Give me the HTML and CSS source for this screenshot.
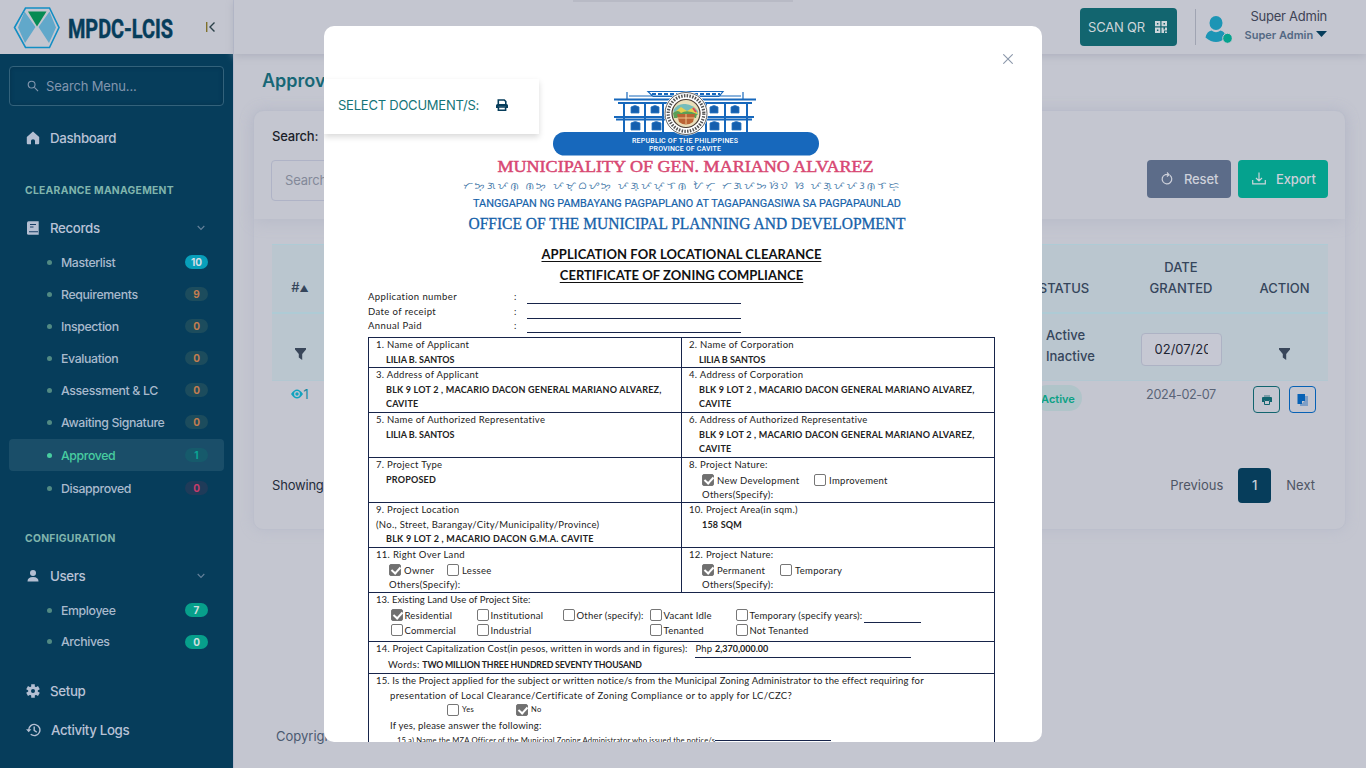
FILE: index.html
```html
<!DOCTYPE html>
<html lang="en">
<head>
<meta charset="utf-8">
<title>MPDC-LCIS</title>
<link rel="stylesheet" href="styles.css">
</head>
<body>
<div class="app">
  <aside class="sidebar">
    <div class="brand">
      <svg class="logo" width="170" height="46" viewBox="0 0 170 46">
        <path d="M12.500 4h24l9.500 19.500-9.500 20h-24L1.500 23.500z" fill="none" stroke="#128ec4" stroke-width="1.600"/>
        <path d="M11.500 7.500L5 23.500l7 15.500 10.500-16zM36.500 7.500L43 23.500 36 39 25.500 23z" fill="#61a8ca"/>
        <path d="M15 7.500h18.500L24 22.500z" fill="#078b53"/>
        <text x="55" y="33.500" textLength="105" lengthAdjust="spacingAndGlyphs" class="logo-text">MPDC-LCIS</text>
      </svg>
      <svg class="collapse" width="12" height="12" viewBox="0 0 12 12" fill="none" stroke="#2b4049" stroke-width="1.400"><path d="M1.700 1v10" stroke="#80702a"/><path d="M9.500 1.500L5 6l4.500 4.500"/></svg>
    </div>
    <nav class="menu">
      <div class="menu-search">
        <svg width="12" height="12" viewBox="0 0 13 13" fill="none" stroke="#8296ae" stroke-width="1.200"><circle cx="5" cy="5" r="3.700"/><path d="M8 8l4 4"/></svg>
        <span>Search Menu...</span>
      </div>
      <div class="item item-dash"><svg width="14" height="14" viewBox="0 0 14 14" fill="#b4bfd2"><path d="M7 .6L.8 6v6.200q0 1 1 1H5V9.800q0-1.500 2-1.500t2 1.500v3.400h3.200q1 0 1-1V6z"/></svg><span>Dashboard</span></div>
      <h6>CLEARANCE MANAGEMENT</h6>
      <div class="item item-group"><svg width="14" height="14" viewBox="0 0 14 14"><path d="M2.500.3h10.200v13.400H2.500q-1.500 0-1.500-1.500V1.800Q1 .3 2.500.3z" fill="#b4bfd2"/><path d="M4 3.500h6M4 6h3.500M3 10.800h9" stroke="#173f66" stroke-width="1.100"/></svg><span>Records</span><svg class="chev" width="8" height="6" viewBox="0 0 8 6" fill="none" stroke="#64809a" stroke-width="1.100"><path d="M.7 1L4 4.500 7.300 1"/></svg></div>
      <div class="sub"><i></i><span>Masterlist</span><b class="badge cyan">10</b></div>
      <div class="sub"><i></i><span>Requirements</span><b class="badge warn">9</b></div>
      <div class="sub"><i></i><span>Inspection</span><b class="badge warn">0</b></div>
      <div class="sub"><i></i><span>Evaluation</span><b class="badge warn">0</b></div>
      <div class="sub"><i></i><span>Assessment &amp; LC</span><b class="badge warn">0</b></div>
      <div class="sub"><i></i><span>Awaiting Signature</span><b class="badge warn">0</b></div>
      <div class="sub active"><i></i><span>Approved</span><b class="badge ok">1</b></div>
      <div class="sub"><i></i><span>Disapproved</span><b class="badge bad">0</b></div>
      <h6 class="config">CONFIGURATION</h6>
      <div class="item item-group"><svg width="14" height="14" viewBox="0 0 14 14" fill="#b4bfd2"><circle cx="7" cy="4" r="3"/><path d="M1.500 12.500q0-4.500 5.500-4.500t5.500 4.500z"/></svg><span>Users</span><svg class="chev" width="8" height="6" viewBox="0 0 8 6" fill="none" stroke="#64809a" stroke-width="1.100"><path d="M.7 1L4 4.500 7.300 1"/></svg></div>
      <div class="sub"><i></i><span>Employee</span><b class="badge green">7</b></div>
      <div class="sub sub-last"><i></i><span>Archives</span><b class="badge green">0</b></div>
      <div class="item item-setup"><svg width="14" height="14" viewBox="0 0 14 14"><g stroke="#b4bfd2" stroke-width="3.600"><path d="M7 .2v13.600M1.100 3.600l11.800 6.800M1.100 10.400l11.800-6.800"/></g><circle cx="7" cy="7" r="4.800" fill="#b4bfd2"/><circle cx="7" cy="7" r="2" fill="#063d5b"/></svg><span>Setup</span></div>
      <div class="item item-logs"><svg width="15" height="14" viewBox="0 0 15 14" fill="none" stroke="#b4bfd2" stroke-width="1.400"><path d="M2.700 7A5.600 5.600 0 1 1 4.700 11.300"/><path d="M0 6.200h5.400L2.700 9.300z" fill="#b4bfd2" stroke="none"/><path d="M8.200 3.600V7.300l2.600 1.900"/></svg><span>Activity Logs</span></div>
    </nav>
  </aside>
  <div class="main">
    <header class="topbar">
      <div class="scan"><span>SCAN QR</span><svg width="12" height="12" viewBox="0 0 12 12" fill="#cdd5da"><path fill-rule="evenodd" d="M0 0h5.300v5.300H0zM1.900 1.900v1.500h1.500V1.900zM6.500 0h5.500v5.300H6.500zM8.500 1.900v1.500H10V1.900zM0 6.500h5.300V12H0zM1.900 8.500V10h1.500V8.500zM6.500 6.500h2v2h1.500v-2h2v3H9V12H6.500zM10 10.500h2V12h-2z"/></svg></div>
      <div class="divider"></div>
      <svg class="avatar" width="28" height="28" viewBox="0 0 28 28"><ellipse cx="12" cy="7" rx="6.500" ry="7" fill="#1c95b5"/><path d="M1.500 21.500q1.500-6.500 6-7 4.500 3.500 9 0 4.500.5 5 7-9 9-20 0z" fill="#1c95b5"/><ellipse cx="23.500" cy="22.300" rx="4.800" ry="5" fill="#05a28e" stroke="#c4c6d0"/></svg>
      <div class="who"><span>Super Admin</span><b>Super Admin <svg width="11" height="6" viewBox="0 0 11 6"><path d="M0 0h11L5.500 6z" fill="#063d5b"/></svg></b></div>
    </header>
    <div class="top-strip"></div>
    <section class="content">
      <h1>Approved</h1>
      <div class="card">
        <div class="filters">
          <div class="filter-field"><label>Search:</label><div class="input">Search...</div></div>
          <div class="btn reset"><svg width="12" height="13" viewBox="0 0 12 13" fill="none" stroke="#cdd0da" stroke-width="1.200"><path d="M8.800 3.200A4.800 4.800 0 1 1 4 2.700"/><path d="M4 2.700h3M6 .5l2 2.200-2 2"/></svg>Reset</div>
          <div class="btn export"><svg width="14" height="13" viewBox="0 0 14 13" fill="none" stroke="#cbd6da" stroke-width="1.200"><path d="M.7 8v3.800h12.600V8M7 .5V9M4 6l3 3 3-3"/></svg>Export</div>
        </div>
        <div class="grid-table">
          <div class="tr head"><div>#<small>▲</small></div><div></div><div>STATUS</div><div>DATE<br>GRANTED</div><div class="last">ACTION</div></div>
          <div class="tr filter"><div class="fun"><svg width="11" height="12" viewBox="0 0 11 12"><path d="M0 0h11v1.500L7.200 6v6L3.800 9.500V6L0 1.500z" fill="#39465a"/></svg></div><div></div><div class="opts">Active<br>Inactive</div><div><span class="date"><span>02/07/2024</span></span></div><div class="fun last"><svg width="11" height="12" viewBox="0 0 11 12"><path d="M0 0h11v1.500L7.200 6v6L3.800 9.500V6L0 1.500z" fill="#39465a"/></svg></div></div>
          <div class="tr data"><div class="idx"><svg width="12" height="10" viewBox="0 0 12 10"><path d="M0 5q6-9 12 0-6 9-12 0z" fill="#11a3bf"/><circle cx="6" cy="5" r="2.900" fill="#c4c6d0"/><circle cx="6" cy="5" r="1.700" fill="#11a3bf"/></svg>1</div><div></div><div><span class="pill">Active</span></div><div class="day">2024-02-07</div><div class="acts">
            <span class="act"><svg width="10" height="10" viewBox="0 0 10 10"><path d="M2 0h6v2H2z" fill="#7d9da8"/><path d="M0 3q0-1 1-1h8q1 0 1 1v4H8V5H2v2H0z" fill="#12656f"/><path d="M2.500 5.500h5v4h-5z" fill="none" stroke="#12656f"/></svg></span>
            <span class="act blue"><svg width="11" height="12" viewBox="0 0 11 12"><path d="M3 2h8v10H3z" fill="#7d9ec6"/><path d="M.5 0H8v7L5 10H.5z" fill="#0761b5"/><path d="M5 10V7h3z" fill="#c4c6d0"/></svg></span></div></div>
        </div>
        <div class="pager"><span class="showing">Showing 1 to 1</span><span>Previous</span><b>1</b><span>Next</span></div>
      </div>
      <footer>Copyright © 2024</footer>
    </section>
  </div>
</div>

<div class="modal">
  <svg class="close" width="10" height="10" viewBox="0 0 10 10" stroke="#8c98ab" stroke-width="1.100"><path d="M.3.3l9.400 9.400M9.700.3L.3 9.700"/></svg>
  <div class="select-doc"><span>SELECT DOCUMENT/S:</span><svg width="12" height="12" viewBox="0 0 12 12" fill="none" stroke="#063d5b" stroke-width="1.600"><path d="M2.300 5V1h6l1.500 1.500V5"/><path d="M0 9V6.500Q0 5 1.500 5h9Q12 5 12 6.500V9H9.800V7.500H2.200V9z" fill="#063d5b" stroke="none"/><path d="M2.400 8h7.200v3.200H2.400z" fill="#fff"/></svg></div>
  <div class="doc">
    <svg class="banner" width="450" height="150" viewBox="460 86 450 150">
      <g fill="none" stroke="#1768bc" stroke-width="2">
        <path d="M614 99.500h142M618 103h134M614 117h140M616 119.500h136M624 103v30M645 103v30M663 103v30M706 103v30M725 103v30M747 103v30"/>
        <path d="M627 92v7M743 92v7M629 96h112M648 91.500h75l-4 5h-66z" stroke-width="1.200"/>
        <path d="M652 94h68" stroke-dasharray="4 2"/>
      </g>
      <path d="M631 113v-6q4-3 8 0v6zM651 113v-6q4-3 8 0v6zM710 113v-6q4-3 8 0v6zM731 113v-6q4-3 8 0v6zM631 130v-7q4-3 9 0v7zM652 130v-7q4-3 9 0v7zM710 130v-7q4-3 9 0v7zM732 130v-7q4-3 9 0v7z" fill="#155fae" stroke="#2a76c2" stroke-width=".8"/>
      <rect x="553" y="132" width="266" height="23.500" rx="11.500" fill="#1768bc"/>
      <circle cx="686" cy="113.500" r="22" fill="#fff"/><circle cx="686" cy="113.500" r="21" fill="none" stroke="#3b3b3b" stroke-width=".8"/>
      <circle cx="686" cy="113.500" r="17.800" fill="none" stroke="#555" stroke-width="3.200" stroke-dasharray="1.500 1.300"/>
      <circle cx="686" cy="113.500" r="14" fill="#eadfba" stroke="#4a3d35" stroke-width="1.200"/>
      <path d="M673.500 110q4-7 12-6t12.500 7v4h-24z" fill="#75bdbb"/><path d="M675 112l6-5 6 4 7-4 4 7-8 3-14-1z" fill="#e5cf4e"/><path d="M673 113q5-4 8 0 6-4 16 1l-1 4h-22z" fill="#5b9f56"/><path d="M677 114h18l-2 8q-7 5-14 0z" fill="#bb6435"/><path d="M677 118h18M686 114v10" stroke="#edc189"/><path d="M693 108l3 4" stroke="#dd4961" stroke-width="2"/>
      <text class="b-small" x="632" y="143.200" textLength="106">REPUBLIC OF THE PHILIPPINES</text>
      <text class="b-small" x="649" y="151.200" textLength="72">PROVINCE OF CAVITE</text>
      <text class="b-muni" x="497.500" y="171.500" textLength="376" lengthAdjust="spacingAndGlyphs">MUNICIPALITY OF GEN. MARIANO ALVAREZ</text>
      <text class="b-bay" x="463" y="188.500" textLength="436">ᜆᜅ᜔ᜄᜉᜈ᜔ ᜈᜅ᜔ ᜉᜋ᜔ᜊᜌᜅ᜔ ᜉᜄ᜔ᜉᜉ᜔ᜎᜈᜓ ᜀᜆ᜔ ᜆᜄᜉᜅᜐᜒᜏ ᜐ ᜉᜄ᜔ᜉᜉᜂᜈ᜔ᜎᜇ᜔</text>
      <text class="b-tang" x="473" y="206.800" textLength="428" lengthAdjust="spacingAndGlyphs">TANGGAPAN NG PAMBAYANG PAGPAPLANO AT TAGAPANGASIWA SA PAGPAPAUNLAD</text>
      <text class="b-off" x="468.500" y="228.700" textLength="437" lengthAdjust="spacingAndGlyphs">OFFICE OF THE MUNICIPAL PLANNING AND DEVELOPMENT</text>
    </svg>
    <h2><span class="t1">APPLICATION FOR LOCATIONAL CLEARANCE</span><span class="t2">CERTIFICATE OF ZONING COMPLIANCE</span></h2>
    <div class="meta"><span>Application number</span><span>:</span><u></u></div>
    <div class="meta"><span>Date of receipt</span><span>:</span><u></u></div>
    <div class="meta"><span>Annual Paid</span><span>:</span><u></u></div>
    <div class="form">
      <div class="row short"><div><p>1. Name of Applicant</p><strong class="name">LILIA B. SANTOS</strong></div><div><p>2. Name of Corporation</p><strong class="name">LILIA B SANTOS</strong></div></div>
      <div class="row"><div><p>3. Address of Applicant</p><strong>BLK 9 LOT 2 , MACARIO DACON GENERAL MARIANO ALVAREZ,<br>CAVITE</strong></div><div><p>4. Address of Corporation</p><strong>BLK 9 LOT 2 , MACARIO DACON GENERAL MARIANO ALVAREZ,<br>CAVITE</strong></div></div>
      <div class="row"><div><p>5. Name of Authorized Representative</p><strong class="name">LILIA B. SANTOS</strong></div><div><p>6. Address of Authorized Representative</p><strong>BLK 9 LOT 2 , MACARIO DACON GENERAL MARIANO ALVAREZ,<br>CAVITE</strong></div></div>
      <div class="row"><div><p>7. Project Type</p><strong>PROPOSED</strong></div><div><p>8. Project Nature:</p><div class="checks"><label class="w112"><input type="checkbox" checked>New Development</label><label><input type="checkbox">Improvement</label></div><p class="others">Others(Specify):</p></div></div>
      <div class="row"><div><p>9. Project Location</p><p>(No., Street, Barangay/City/Municipality/Province)</p><strong class="loc">BLK 9 LOT 2 , MACARIO DACON G.M.A. CAVITE</strong></div><div><p>10. Project Area(in sqm.)</p><strong class="sqm">158 SQM</strong></div></div>
      <div class="row"><div><p>11. Right Over Land</p><div class="checks left"><label class="w58"><input type="checkbox" checked>Owner</label><label><input type="checkbox">Lessee</label></div><p class="others">Others(Specify):</p></div><div><p>12. Project Nature:</p><div class="checks"><label class="w78"><input type="checkbox" checked>Permanent</label><label><input type="checkbox">Temporary</label></div><p class="others">Others(Specify):</p></div></div>
      <div class="wide r13"><p class="q13">13. Existing Land Use of Project Site:</p>
        <div class="uses"><label><input type="checkbox" checked>Residential</label><label><input type="checkbox">Institutional</label><label><input type="checkbox">Other (specify):</label><label><input type="checkbox">Vacant Idle</label><label><input type="checkbox">Temporary (specify years):<u></u></label>
        <label><input type="checkbox">Commercial</label><label><input type="checkbox">Industrial</label><span></span><label><input type="checkbox">Tenanted</label><label><input type="checkbox">Not Tenanted</label></div></div>
      <div class="wide r14"><div class="cost"><p>14. Project Capitalization Cost(in pesos, written in words and in figures):</p><div class="php">Php <b>2,370,000.00</b></div></div><p class="words">Words: <b>TWO MILLION THREE HUNDRED SEVENTY THOUSAND</b></p></div>
      <div class="wide r15"><p class="q1">15. Is the Project applied for the subject or written notice/s from the Municipal Zoning Administrator to the effect requiring for</p><p class="q2">presentation of Local Clearance/Certificate of Zoning Compliance or to apply for LC/CZC?</p>
        <div class="yn"><label><input type="checkbox">Yes</label><label><input type="checkbox" checked>No</label></div>
        <p class="ify">If yes, please answer the following:</p><div class="qa"><span>15.a) Name the MZA Officer of the Municipal Zoning Administrator who issued the notice/s</span><u></u></div></div>
    </div>
  </div>
</div>
</body>
</html>
```

FILE: styles.css
```css
* { box-sizing: border-box; }
body { margin: 0; width: 1366px; height: 768px; overflow: hidden; background: #c4c6d0; font-family: Inter, sans-serif; font-size: 13px; color: #39465a; }
h1, h2, h6, p { margin: 0; }
.app { display: flex; width: 1366px; height: 768px; }
.sidebar { width: 234px; height: 768px; border-right: 1px solid #b5b9cb; background: #063d5b; }
.brand { display: flex; height: 54px; background: #c4c6d0; padding: 4px 0 0 13px; }
.logo-text { font: 700 26px Roboto, sans-serif; fill: #063d5b; stroke: #063d5b; stroke-width: .5px; }
.collapse { margin: 17px 0 0 22px; }
.menu { padding: 12px 9px 0; display: flex; flex-direction: column; }
.menu-search { height: 40px; border: 1px solid #33627b; border-radius: 4px; display: flex; align-items: center; padding: 0 0 1px 17px; gap: 7px; color: #8296ae; font-size: 13px; letter-spacing: -.15px; box-shadow: inset 0 0 4px #05324d; }
.item { display: flex; align-items: center; gap: 10px; padding-left: 17px; height: 36px; color: #b9c2d6; font-weight: 500; font-size: 13.3px; letter-spacing: -.35px; }
.item-dash { margin-top: 14px; padding-bottom: 1px; }
.chev { margin-left: auto; margin-right: 19px; }
h6 { margin-top: 24px; height: 20px; line-height: 20px; padding-left: 16px; font-size: 10.3px; letter-spacing: .3px; font-weight: 700; color: #80b5ad; }
h6.config { margin-top: 24px; }
.item-group { margin-top: 10px; }
.sub { display: flex; align-items: center; height: 32px; padding: 0 16px 0 38px; color: #a9bacd; font-weight: 500; font-size: 12.3px; letter-spacing: -.37px; border-radius: 4px; }
.sub i { width: 5px; height: 5px; border-radius: 50%; background: #518a83; margin-right: 9px; }
.sub.active { background: #1a4e69; color: #48cda0; margin: 1px 0; }
.sub.active i { background: #48cda0; }
.sub-last { height: 31px; }
.badge { margin-left: auto; width: 23px; height: 14px; border-radius: 7px; line-height: 14.500px; text-align: center; font-size: 10px; letter-spacing: 0; }
.cyan { background: #089fba; color: #d4dde5; }
.green { background: #079f8b; color: #cfe0e0; }
.warn { background: #1c4c5d; color: #c27d50; }
.ok { background: #165a6b; color: #0aa695; }
.bad { background: #1f3b59; color: #c63c6b; }
.item-setup { margin-top: 16px; }
.item-logs { margin-top: 3px; }
.main { flex: 1; }
.topbar { height: 54px; display: flex; align-items: flex-start; justify-content: flex-end; padding-right: 39px; box-shadow: 0 2px 8px #adb0bd; }
.top-strip { position: absolute; left: 573px; top: 0; width: 220px; height: 2px; background: #b8bac5; }
.scan { margin-top: 8px; width: 97px; height: 38px; border-radius: 4px; background: #12656f; color: #cdd5da; display: flex; align-items: center; padding: 0 0 1px 8px; gap: 10px; font-size: 13px; letter-spacing: -.2px; }
.divider { margin: 9px 8px 0 18px; width: 1px; height: 36px; background: #a0a4b2; }
.avatar { margin-top: 16px; }
.who { width: 95px; display: flex; flex-direction: column; align-items: flex-end; padding-top: 8px; line-height: 17px; color: #3e4355; font-size: 13px; letter-spacing: -.25px; }
.who b { font-size: 11px; color: #536984; line-height: 21px; font-weight: 600; white-space: nowrap; letter-spacing: 0; }
.who svg { vertical-align: 2px; }
.content { padding: 15px 20px 0 19px; }
h1 { font-size: 18px; line-height: 24px; font-weight: 600; color: #176776; padding-left: 9px; }
.card { margin-top: 17px; height: 420px; border-radius: 10px; border: 1px solid #bcbfcc; box-shadow: 0 0 14px #b9bccb; background: #c4c6d0; }
.filters { height: 108px; display: flex; gap: 7px; padding: 16px 17px 0; box-shadow: 0 3px 16px #b7bac8; border-radius: 10px 10px 0 0; }
.filter-field { flex: 1; }
.filter-field label { color: #1b1e29; font-weight: 500; line-height: 18px; font-size: 13px; padding-left: 1px; letter-spacing: -.2px; }
.input { margin-top: 15px; width: 300px; height: 41px; border: 1px solid #afb3c6; border-radius: 4px; line-height: 39px; padding-left: 13px; color: #838999; letter-spacing: -.2px; }
.btn { margin-top: 33px; height: 38px; border-radius: 4px; display: flex; align-items: center; padding-bottom: 1px; font-weight: 500; font-size: 13px; letter-spacing: -.15px; color: #cdd0da; }
.reset { width: 84px; background: #5c6c89; padding-left: 14px; gap: 11px; }
.export { width: 90px; background: #05a28e; padding-left: 14px; gap: 10px; margin-right: 0; }
.grid-table { margin: 25px 17px 0 18px; line-height: 21px; }
.tr { display: grid; grid-template-columns: 56px 672px 128px 106px 94px; }
.tr > div { text-align: center; }
.tr > .last { padding-left: 7px; }
.head, .filter { background: #bac6cf; border-top: 1px solid #aecbd5; font-weight: 500; color: #35455b; }
.head { height: 68px; align-items: end; padding-bottom: 13px; }
.head small { font-size: 9px; }
.filter { height: 69px; align-items: center; border-top-width: 2px; border-bottom: 1px solid #b3c7d1; padding-bottom: 2px; }
.filter .opts { text-align: left; padding-left: 46px; }
.fun { padding-top: 19px; }
.date { display: inline-block; width: 81px; height: 33px; margin-top: 12px; border: 1px solid #adb2c4; border-radius: 4px; background: #c6c8d3; color: #1e2534; font-weight: 400; line-height: 31px; padding: 0 13px; }
.date span { display: block; width: 53px; overflow: hidden; }
.data { align-items: start; }
.idx { color: #17889f; padding-top: 3px; }
.pill { display: inline-block; margin: 4px 0 0 -12px; background: #b0c4c9; color: #0aa184; border-radius: 13px; height: 26px; line-height: 28px; padding: 0 7px; font-size: 11px; font-weight: 600; }
.day { color: #5a6477; padding-top: 3px; font-size: 12.700px; letter-spacing: -.4px; }
.acts { display: flex; gap: 9px; padding: 5px 0 0 19px; }
.act { width: 27px; height: 27px; border: 1px solid #12656f; border-radius: 4px; display: flex; align-items: center; justify-content: center; }
.act.blue { border-color: #0761b5; }
.pager { display: flex; align-items: center; height: 34px; margin: 55px 30px 0 18px; font-size: 13px; color: #4e5564; }
.showing { margin-right: auto; color: #252c3b; letter-spacing: -.2px; }
.pager b { width: 33px; height: 35px; margin: 0 15px; border-radius: 4px; background: #063d5b; color: #c6d0da; display: grid; place-items: center; font-weight: 500; }
footer { margin: 197px 0 0 23px; color: #4b5a70; line-height: 18px; }

.modal { position: absolute; left: 324px; top: 26px; width: 718px; height: 716px; border-radius: 10px; background: #fff; overflow: hidden; }
.close { position: absolute; right: 29px; top: 28px; }
.select-doc { position: absolute; left: 0; top: 53px; width: 215px; height: 55px; background: #fff; box-shadow: 0 3px 6px #dadada; display: flex; align-items: center; padding: 0 0 3px 14px; gap: 17px; color: #147478; font-size: 13px; letter-spacing: -.23px; }
.doc { padding: 60px 47px 0 44px; font-family: Lato, sans-serif; font-size: 9.5px; color: #222; }
.banner { display: block; margin-left: 92px; }
.b-small { font: 500 7px Roboto, sans-serif; fill: #fff; }
.b-muni { font: 17px "Liberation Serif", serif; fill: #d84873; stroke: #d84873; stroke-width: .5px; }
.b-bay { font: 10px "Noto Sans Tagalog", "Noto Sans", sans-serif; fill: #4579a9; }
.b-tang { font: 11.500px Roboto, sans-serif; fill: #1561a9; stroke: #1561a9; stroke-width: .2px; }
.b-off { font: 16px "Liberation Serif", serif; fill: #1561a9; stroke: #1561a9; stroke-width: .3px; }
h2 { display: flex; flex-direction: column; align-items: center; height: 54px; padding-top: 8px; font-size: 13px; line-height: 21px; color: #111; }
h2 span { text-decoration: underline; text-underline-offset: 2px; letter-spacing: .09px; }
.t2 { letter-spacing: .03px; }
.meta { display: grid; grid-template-columns: 146px 13px 214px; height: 14.600px; line-height: 14px; letter-spacing: .4px; }
.meta u { border-bottom: 1px solid #17244a; height: 14px; }
.form { margin-top: 3px; width: 627px; border: 1px solid #17244a; letter-spacing: .3px; }
.form p { line-height: 14.500px; height: 15px; white-space: nowrap; }
.row { display: grid; grid-template-columns: 312px 313px; height: 45px; border-bottom: 1px solid #17244a; }
.row.short { height: 30px; }
.row > div { padding-left: 7px; }
.row > div + div { border-left: 1px solid #17244a; }
strong { display: block; padding: 0 0 0 10px; line-height: 14px; font-size: 9px; letter-spacing: .2px; font-weight: 700; white-space: nowrap; }
strong.name { letter-spacing: 0; }
strong.loc { letter-spacing: .25px; margin-top: -1px; }
strong.sqm { padding-left: 13px; }
label { display: inline-flex; align-items: center; gap: 3px; white-space: nowrap; }
label input { appearance: none; margin: 0; width: 12px; height: 12px; border: 1px solid #767676; border-radius: 2px; background: #fff; flex: none; }
label input:checked { background: #707070; position: relative; }
label input:checked::after { content: ""; position: absolute; left: 3px; top: 0; width: 4px; height: 7px; border: solid #fff; border-width: 0 2px 2px 0; transform: rotate(42deg); }
.checks { display: flex; height: 15px; padding-left: 13px; }
.form .others { padding-left: 13px; line-height: 13px; }
.w112 { width: 112px; } .w58 { width: 58px; } .w78 { width: 78px; }
.wide { padding-left: 7px; border-bottom: 1px solid #17244a; }
.r13 { height: 49px; }
.form .q13 { letter-spacing: .05px; }
.uses { display: grid; grid-template-columns: 86px 86px 87px 86px 1fr; grid-auto-rows: 15px; padding-left: 14.500px; letter-spacing: .22px; }
.uses label { gap: 2px; }
.uses u { width: 57px; height: 15px; border-bottom: 1px solid #17244a; }
.r14 { height: 32px; }
.cost { display: flex; gap: 8px; height: 16px; letter-spacing: .18px; }
.php { line-height: 14.500px; width: 216px; border-bottom: 1px solid #17244a; }
.php b { font-size: 9px; letter-spacing: 0; }
.form .words { padding-left: 12px; }
.words b { font-size: 8.700px; letter-spacing: -.15px; }
.r15 { height: 100px; border-bottom: 0; }
.form .q1 { letter-spacing: .17px; }
.form .q2 { padding-left: 14px; line-height: 13px; height: 13px; letter-spacing: .33px; }
.yn { display: flex; height: 14px; margin-top: 1px; padding-left: 71px; font-size: 7.500px; }
.yn label:first-child { width: 69px; }
.form .ify { padding: 2px 0 0 14px; height: 17px; letter-spacing: .2px; }
.qa { display: flex; padding-left: 21px; font-size: 7.700px; letter-spacing: .12px; height: 12px; line-height: 12px; white-space: nowrap; }
.qa u { width: 116px; height: 7px; border-bottom: 1px solid #17244a; }
```
